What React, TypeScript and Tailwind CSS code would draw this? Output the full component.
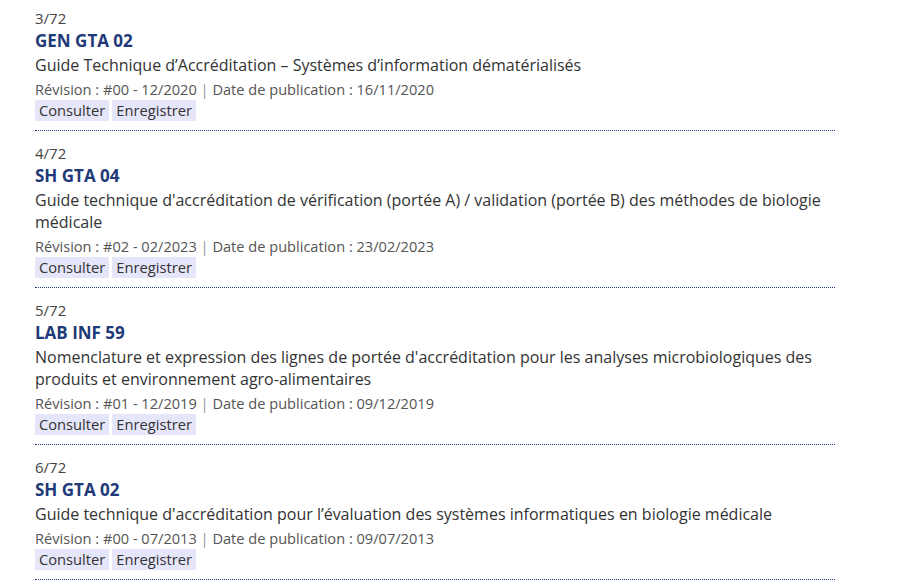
import React from "react";

type Doc = {
  idx: string;
  code: string;
  title: string;
  rev: string;
  date: string;
};

const docs: Doc[] = [
  {
    idx: "3/72",
    code: "GEN GTA 02",
    title: "Guide Technique d’Accréditation – Systèmes d’information dématérialisés",
    rev: "#00 - 12/2020",
    date: "16/11/2020",
  },
  {
    idx: "4/72",
    code: "SH GTA 04",
    title:
      "Guide technique d'accréditation de vérification (portée A) / validation (portée B) des méthodes de biologie médicale",
    rev: "#02 - 02/2023",
    date: "23/02/2023",
  },
  {
    idx: "5/72",
    code: "LAB INF 59",
    title:
      "Nomenclature et expression des lignes de portée d'accréditation pour les analyses microbiologiques des produits et environnement agro-alimentaires",
    rev: "#01 - 12/2019",
    date: "09/12/2019",
  },
  {
    idx: "6/72",
    code: "SH GTA 02",
    title: "Guide technique d'accréditation pour l’évaluation des systèmes informatiques en biologie médicale",
    rev: "#00 - 07/2013",
    date: "09/07/2013",
  },
];

export default function App() {
  return (
    <div
      className="bg-white w-[920px] h-[588px] overflow-hidden"
      style={{ fontFamily: "'Open Sans', 'Noto Sans', sans-serif" }}
    >
      <div className="ml-[35px] w-[800px] mt-[-4px]">
        {docs.map((d) => (
          <div key={d.idx} className="pt-[11px] pb-[9px] border-b border-dotted border-[#1e3a78]">
            <div className="text-[15px] leading-[22px] text-[#444]">{d.idx}</div>
            <div className="text-[17px] leading-[24px] font-bold text-[#1e3a78]">{d.code}</div>
            <div className="mt-[1px] text-[16px] leading-[22px] text-[#333]">{d.title}</div>
            <div className="mt-[2px] text-[14.6px] leading-[22px] text-[#555]">
              Révision : {d.rev} <span className="text-[#999]">|</span> Date de publication : {d.date}
            </div>
            <div className="flex gap-[3px]">
              <span className="bg-[#e6e6fa] px-[4px] h-[21px] leading-[21px] text-[14.7px] text-[#333]">
                Consulter
              </span>
              <span className="bg-[#e6e6fa] px-[4px] h-[21px] leading-[21px] text-[14.7px] text-[#333]">
                Enregistrer
              </span>
            </div>
          </div>
        ))}
      </div>
    </div>
  );
}
